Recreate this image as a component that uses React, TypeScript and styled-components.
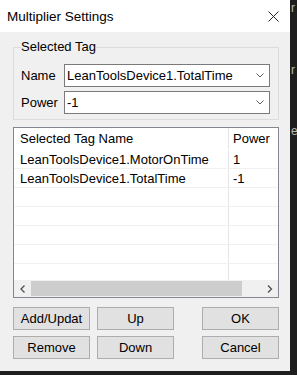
import React from "react";
import styled, { createGlobalStyle } from "styled-components";

const GlobalStyle = createGlobalStyle`
    html, body {
        margin: 0;
        padding: 0;
        background: #1e1e1e;
    }
    body {
        font-family: "Liberation Sans", Arial, sans-serif;
        color: #000;
    }
`;

const Screen = styled.div`
    display: flex;
    width: 297px;
    height: 375px;
    background: #1e1e1e;
    overflow: hidden;
`;

const Dialog = styled.div`
    display: flex;
    flex-direction: column;
    width: 290px;
    height: 371px;
    background: #f0f0f0;
    flex-shrink: 0;
`;

const TitleBar = styled.div`
    display: flex;
    align-items: center;
    justify-content: space-between;
    height: 32px;
    box-sizing: border-box;
    padding: 1px 11px 0 7px;
    background: #ffffff;
    font-size: 13.5px;
`;

const Body = styled.div`
    display: flex;
    flex-direction: column;
    padding: 0 11px 0 13px;
`;

const GroupBox = styled.fieldset`
    margin: 7px 0 0;
    padding: 9px 8px 5px 7px;
    border: 1px solid #dcdcdc;
    min-width: 0;
`;

const Legend = styled.legend`
    padding: 0;
    font-size: 13px;
    line-height: 16px;
`;

const FieldGrid = styled.div`
    display: grid;
    grid-template-columns: 43px 1fr;
    row-gap: 4px;
    align-items: center;
    font-size: 13px;
`;

const Combo = styled.div`
    display: flex;
    align-items: center;
    justify-content: space-between;
    height: 23px;
    box-sizing: border-box;
    padding: 0 5px 0 2px;
    border: 1px solid #7a7a7a;
    background: #ffffff;
    font-size: 13px;
`;

const ListView = styled.div`
    display: flex;
    flex-direction: column;
    margin-top: 7px;
    height: 171px;
    box-sizing: border-box;
    border: 1px solid #828790;
    background: #ffffff;
`;

const Viewport = styled.div`
    flex: 1;
    overflow: hidden;
`;

const Row = styled.div<{ $header?: boolean }>`
    display: grid;
    grid-template-columns: 215px 80px;
    height: ${(p) => (p.$header ? "22px" : "19px")};
    box-sizing: border-box;
    border-bottom: 1px solid ${(p) => (p.$header ? "transparent" : "#f0f0f0")};
    font-size: 13px;
`;

const Cell = styled.div<{ $first?: boolean }>`
    display: flex;
    align-items: center;
    box-sizing: border-box;
    padding-left: ${(p) => (p.$first ? "6px" : "4px")};
    border-right: ${(p) => (p.$first ? "1px solid #e5e5e5" : "none")};
    white-space: nowrap;
    overflow: hidden;
`;

const ScrollBar = styled.div`
    display: flex;
    height: 17px;
    background: #f0f0f0;
`;

const ScrollArrow = styled.div`
    display: flex;
    align-items: center;
    justify-content: center;
    width: 17px;
`;

const Track = styled.div`
    flex: 1;
    display: flex;
    padding: 1px 0;
`;

const Thumb = styled.div`
    width: 211px;
    background: #cdcdcd;
`;

const ButtonArea = styled.div`
    display: flex;
    flex-direction: column;
    gap: 6px;
    margin-top: 9px;
`;

const ButtonRow = styled.div`
    display: flex;
    gap: 7px;
`;

const Button = styled.button<{ $push?: boolean }>`
    width: 77px;
    height: 23px;
    margin-left: ${(p) => (p.$push ? "auto" : "0")};
    padding: 0;
    border: 1px solid #adadad;
    background: #e1e1e1;
    font-family: "Liberation Sans", Arial, sans-serif;
    font-size: 13px;
    color: #000;
`;

const Strip = styled.div`
    display: flex;
    flex-direction: column;
    padding-left: 1px;
    color: #b8b8b8;
    font-size: 12px;
    line-height: 12px;
`;

const Glyph = styled.span<{ $top: number }>`
    margin-top: ${(p) => p.$top}px;
`;

function Chevron() {
    return (
        <svg width="8" height="5" viewBox="0 0 8 5">
            <polyline points="0.5,0.5 4,4 7.5,0.5" fill="none" stroke="#606060" strokeWidth="1" />
        </svg>
    );
}

function ArrowGlyph({ dir }: { dir: "left" | "right" }) {
    const pts = dir === "left" ? "4.5,0.5 1,4 4.5,7.5" : "1,0.5 4.5,4 1,7.5";
    return (
        <svg width="6" height="8" viewBox="0 0 6 8">
            <polyline points={pts} fill="none" stroke="#505050" strokeWidth="1.3" />
        </svg>
    );
}

const rows = [
    { name: "LeanToolsDevice1.MotorOnTime", power: "1" },
    { name: "LeanToolsDevice1.TotalTime", power: "-1" },
];

export default function App() {
    return (
        <>
            <GlobalStyle />
            <Screen>
                <Dialog>
                    <TitleBar>
                        <span>Multiplier Settings</span>
                        <svg width="11" height="11" viewBox="0 0 11 11">
                            <path d="M0.5 0.5 L10.5 10.5 M10.5 0.5 L0.5 10.5" stroke="#222" strokeWidth="1" />
                        </svg>
                    </TitleBar>
                    <Body>
                        <GroupBox>
                            <Legend>Selected Tag</Legend>
                            <FieldGrid>
                                <span>Name</span>
                                <Combo>
                                    <span>LeanToolsDevice1.TotalTime</span>
                                    <Chevron />
                                </Combo>
                                <span>Power</span>
                                <Combo>
                                    <span>-1</span>
                                    <Chevron />
                                </Combo>
                            </FieldGrid>
                        </GroupBox>

                        <ListView>
                            <Viewport>
                                <Row $header>
                                    <Cell $first>Selected Tag Name</Cell>
                                    <Cell>Power</Cell>
                                </Row>
                                {rows.map((r) => (
                                    <Row key={r.name}>
                                        <Cell $first>{r.name}</Cell>
                                        <Cell>{r.power}</Cell>
                                    </Row>
                                ))}
                                {[0, 1, 2, 3, 4, 5].map((i) => (
                                    <Row key={i}>
                                        <Cell $first />
                                        <Cell />
                                    </Row>
                                ))}
                            </Viewport>
                            <ScrollBar>
                                <ScrollArrow>
                                    <ArrowGlyph dir="left" />
                                </ScrollArrow>
                                <Track>
                                    <Thumb />
                                </Track>
                                <ScrollArrow>
                                    <ArrowGlyph dir="right" />
                                </ScrollArrow>
                            </ScrollBar>
                        </ListView>

                        <ButtonArea>
                            <ButtonRow>
                                <Button>Add/Updat</Button>
                                <Button>Up</Button>
                                <Button $push>OK</Button>
                            </ButtonRow>
                            <ButtonRow>
                                <Button>Remove</Button>
                                <Button>Down</Button>
                                <Button $push>Cancel</Button>
                            </ButtonRow>
                        </ButtonArea>
                    </Body>
                </Dialog>
                <Strip>
                    <Glyph $top={2}>r</Glyph>
                    <Glyph $top={50}>r</Glyph>
                    <Glyph $top={49}>e</Glyph>
                </Strip>
            </Screen>
        </>
    );
}
